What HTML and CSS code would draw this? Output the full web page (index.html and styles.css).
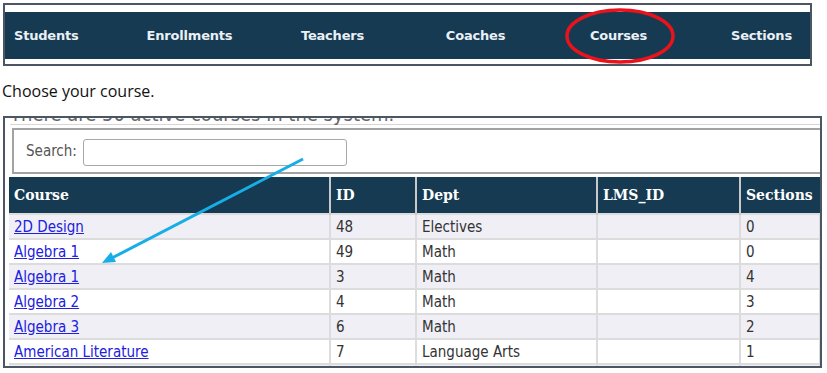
FILE: index.html
```html
<!DOCTYPE html>
<html lang="en">
<head>
    <meta charset="UTF-8">
    <title>Courses</title>
    <link rel="stylesheet" href="styles.css">
</head>
<body>
<div class="nav-frame">
    <nav class="nav">
        <a class="nav__item nav__item--first">Students</a>
        <a class="nav__item">Enrollments</a>
        <a class="nav__item">Teachers</a>
        <a class="nav__item">Coaches</a>
        <a class="nav__item">Courses</a>
        <a class="nav__item">Sections</a>
    </nav>
</div>

<p class="intro">Choose your course.</p>

<div class="shot">
    <h2 class="count">There are 50 active courses in the system.</h2>
    <div class="search-bar">
        <label for="search" class="search-bar__label">Search:</label>
        <input type="text" id="search" class="search-bar__input">
    </div>
    <table class="courses">
        <colgroup>
            <col class="col-course">
            <col class="col-id">
            <col class="col-dept">
            <col class="col-lms">
            <col class="col-sections">
        </colgroup>
        <thead>
            <tr><th>Course</th><th>ID</th><th>Dept</th><th>LMS_ID</th><th>Sections</th></tr>
        </thead>
        <tbody>
            <tr><td><a href="#">2D Design</a></td><td>48</td><td>Electives</td><td></td><td>0</td></tr>
            <tr><td><a href="#">Algebra 1</a></td><td>49</td><td>Math</td><td></td><td>0</td></tr>
            <tr><td><a href="#">Algebra 1</a></td><td>3</td><td>Math</td><td></td><td>4</td></tr>
            <tr><td><a href="#">Algebra 2</a></td><td>4</td><td>Math</td><td></td><td>3</td></tr>
            <tr><td><a href="#">Algebra 3</a></td><td>6</td><td>Math</td><td></td><td>2</td></tr>
            <tr><td><a href="#">American Literature</a></td><td>7</td><td>Language Arts</td><td></td><td>1</td></tr>
            <tr><td><a href="#">Art 1</a></td><td>8</td><td>Electives</td><td></td><td>2</td></tr>
        </tbody>
    </table>
</div>

<!-- annotations drawn over the screenshot -->
<svg class="marks" width="827" height="373" viewBox="0 0 827 373">
    <ellipse cx="620" cy="36" rx="53" ry="26" fill="none" stroke="#e8131b" stroke-width="3.5"/>
    <line x1="303" y1="159" x2="112" y2="258" stroke="#17ade6" stroke-width="3"/>
    <polygon points="102,263 111,252 116,262" fill="#17ade6"/>
</svg>
</body>
</html>
```

FILE: styles.css
```css
html, body {
    margin: 0;
    padding: 0;
    background: #fff;
}

body {
    position: relative;
    width: 827px;
    height: 373px;
    overflow: hidden;
}

.nav-frame {
    box-sizing: border-box;
    margin: 3px 0 0 3px;
    width: 809px;
    border: 2px solid #4b5564;
    padding: 7px 0 5px;
    overflow: hidden;
}

.nav {
    display: grid;
    grid-template-columns: 113px repeat(5, 143px);
    align-items: center;
    height: 47px;
    background: #163a52;
}

.nav__item {
    justify-self: center;
    font-family: "DejaVu Sans", sans-serif;
    font-weight: bold;
    font-size: 13px;
    color: #eaf0f5;
    letter-spacing: -0.2px;
}

.nav__item--first {
    justify-self: start;
    padding-left: 9px;
}

.intro {
    margin: 14px 0 0 2px;
    font-family: "Open Sans", sans-serif;
    font-size: 16px;
    line-height: 22px;
    color: #111;
}

.shot {
    box-sizing: border-box;
    margin: 14px 0 0 3px;
    width: 819px;
    height: 252px;
    border: 2px solid #4b5564;
    padding-left: 4px;
    overflow: hidden;
}

.count {
    margin: -14px 0 3px 1px;
    font-family: "DejaVu Sans Condensed", "DejaVu Sans", sans-serif;
    font-weight: normal;
    font-size: 20px;
    line-height: 20px;
    color: #666;
    border-bottom: 1px solid #d6d6d6;
    white-space: nowrap;
}

.search-bar {
    box-sizing: border-box;
    display: flex;
    align-items: center;
    gap: 6px;
    margin: 0 0 3px 3px;
    height: 46px;
    border: 2px solid #a3a3a3;
    border-right: none;
    padding-left: 12px;
}

.search-bar__label {
    font-family: "DejaVu Sans Condensed", "DejaVu Sans", sans-serif;
    font-size: 15px;
    color: #555;
}

.search-bar__input {
    box-sizing: border-box;
    width: 264px;
    height: 27px;
    margin: 2px 0 0;
    border: 1px solid #a8a8a8;
    border-radius: 3px;
}

.courses {
    width: 811px;
    table-layout: fixed;
    border-collapse: collapse;
}

.col-course { width: 321px; }
.col-id { width: 86px; }
.col-dept { width: 181px; }
.col-lms { width: 143px; }
.col-sections { width: 80px; }

.courses th {
    height: 36px;
    padding: 0 0 0 5px;
    text-align: left;
    background: #163a52;
    color: #fff;
    font-family: "DejaVu Serif", serif;
    font-weight: bold;
    font-size: 14px;
    border-left: 2px solid #c9c9c9;
}

.courses th:first-child {
    border-left: none;
}

.courses td {
    height: 23px;
    padding: 0 0 0 5px;
    border: 2px solid #dcdcdc;
    font-family: "DejaVu Sans Condensed", "DejaVu Sans", sans-serif;
    font-size: 15px;
    line-height: 18px;
    color: #333;
    white-space: nowrap;
}

.courses td:first-child {
    border-left: none;
}

.courses tbody tr:nth-child(odd) td {
    background: #efeff5;
}

.courses a {
    color: #2020e0;
}

.marks {
    position: absolute;
    top: 0;
    left: 0;
    pointer-events: none;
}
```
